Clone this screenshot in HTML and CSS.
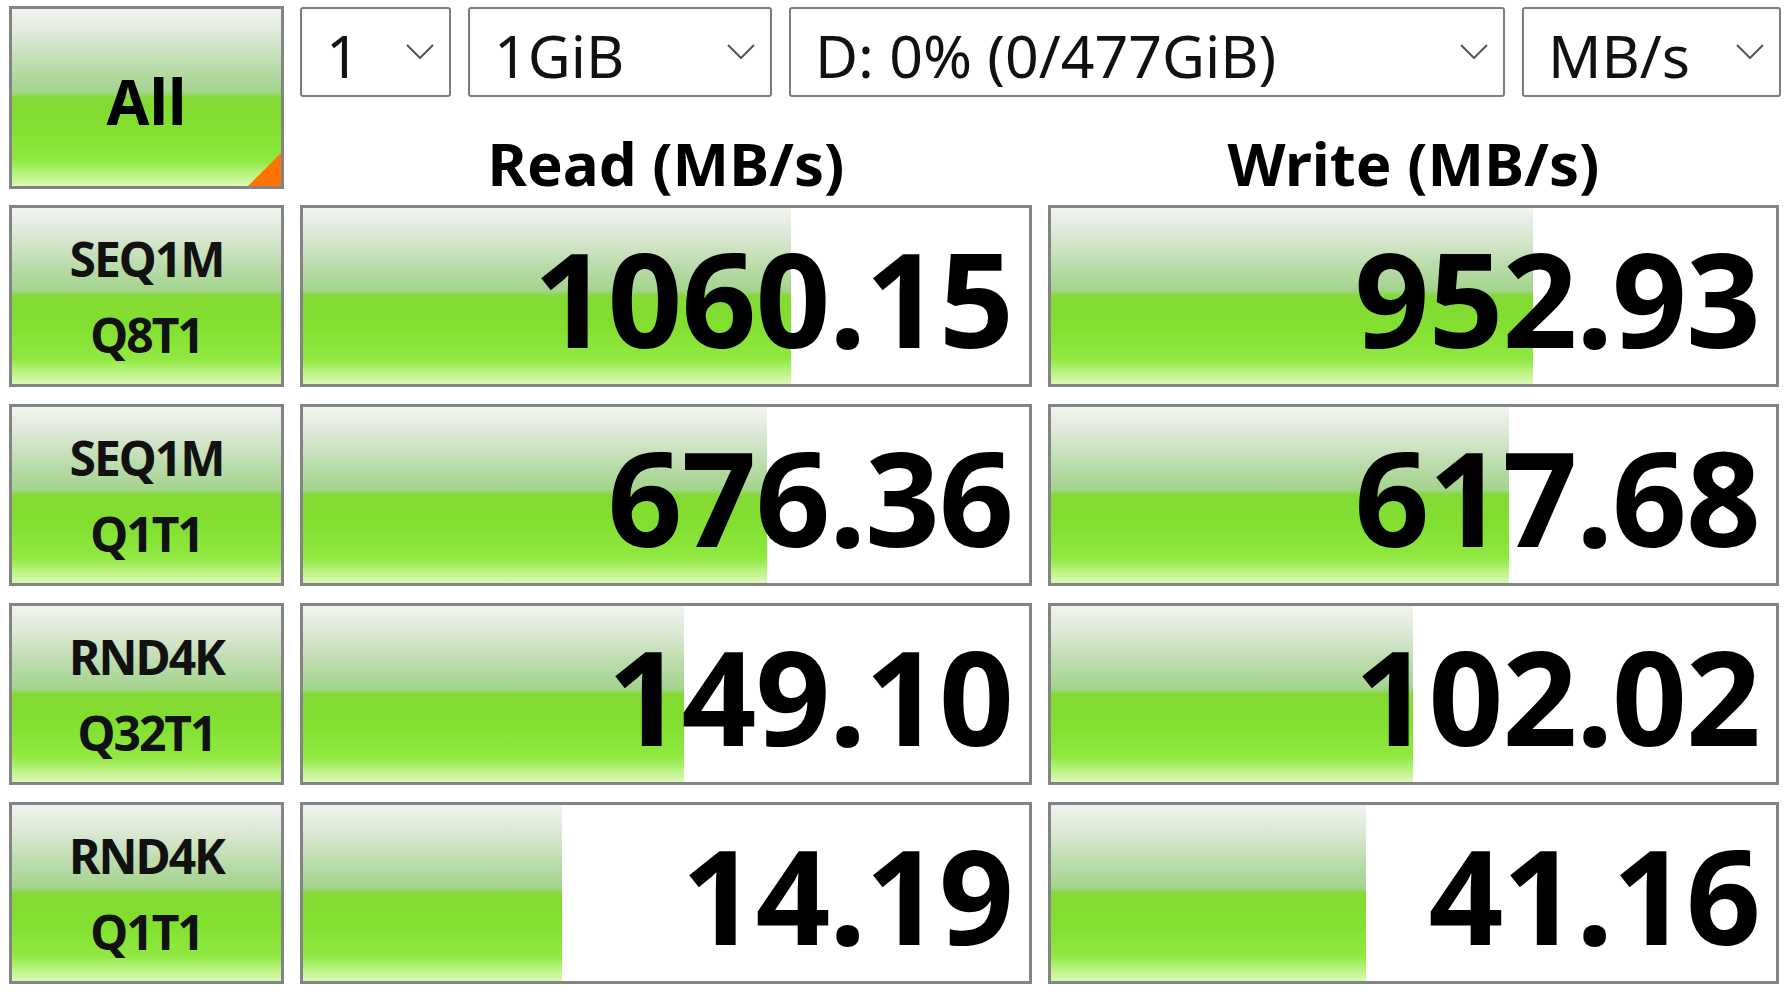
FILE: index.html
```html
<!DOCTYPE html>
<html lang="en">
<head>
<meta charset="utf-8">
<title>CrystalDiskMark</title>
<link rel="stylesheet" href="styles.css">
</head>
<body>
<div class="app">
  <div class="top">
    <div class="all green">All<span class="corner"></span></div>
    <div class="selects">
      <div class="select s-count"><span>1</span><svg class="chev" viewBox="0 0 28 15"><polyline points="1,1 14,14 27,1"/></svg></div>
      <div class="select s-size"><span>1GiB</span><svg class="chev" viewBox="0 0 28 15"><polyline points="1,1 14,14 27,1"/></svg></div>
      <div class="select s-drive"><span>D: 0% (0/477GiB)</span><svg class="chev" viewBox="0 0 28 15"><polyline points="1,1 14,14 27,1"/></svg></div>
      <div class="select s-unit"><span>MB/s</span><svg class="chev" viewBox="0 0 28 15"><polyline points="1,1 14,14 27,1"/></svg></div>
    </div>
    <div class="head">Read (MB/s)</div>
    <div class="head">Write (MB/s)</div>
  </div>
  <div class="results">
    <div class="label green"><span>SEQ1M</span><span>Q8T1</span></div>
    <div class="cell"><div class="bar" style="width:67.2%"></div><div class="num">1060.15</div></div>
    <div class="cell"><div class="bar" style="width:66.5%"></div><div class="num">952.93</div></div>

    <div class="label green"><span>SEQ1M</span><span>Q1T1</span></div>
    <div class="cell"><div class="bar" style="width:63.9%"></div><div class="num">676.36</div></div>
    <div class="cell"><div class="bar" style="width:63.2%"></div><div class="num">617.68</div></div>

    <div class="label green"><span>RND4K</span><span>Q32T1</span></div>
    <div class="cell"><div class="bar" style="width:52.5%"></div><div class="num">149.10</div></div>
    <div class="cell"><div class="bar" style="width:49.9%"></div><div class="num">102.02</div></div>

    <div class="label green"><span>RND4K</span><span>Q1T1</span></div>
    <div class="cell"><div class="bar" style="width:35.7%"></div><div class="num">14.19</div></div>
    <div class="cell"><div class="bar" style="width:43.4%"></div><div class="num">41.16</div></div>
  </div>
</div>
</body>
</html>
```
FILE: styles.css
```css
html, body {
  margin: 0;
  padding: 0;
  background: #ffffff;
}

body {
  font-family: "Noto Sans", "Open Sans", sans-serif;
  color: #000;
}

.app {
  padding: 6px 8px 0 9px;
}

.top,
.results {
  display: grid;
  grid-template-columns: 275px 732px 731px;
  column-gap: 16px;
}

.top {
  grid-template-rows: 91px 92px;
}

.results {
  margin-top: 16px;
  grid-template-rows: repeat(4, 182px);
  row-gap: 17px;
}

.green {
  background: linear-gradient(to bottom,
    #f1f4f0 0%,
    #e0eada 13%,
    #bcdcad 32%,
    #a3d48d 47%,
    #84d934 50%,
    #82e030 68%,
    #91e942 86%,
    #b8f37e 93%,
    #dcf9b8 100%);
}

.all {
  grid-row: 1 / 3;
  grid-column: 1;
  box-sizing: border-box;
  border: 3px solid #848484;
  position: relative;
  display: flex;
  align-items: center;
  justify-content: center;
  font-weight: 700;
  font-size: 62px;
  padding-top: 6px;
  overflow: hidden;
}

.corner {
  position: absolute;
  right: 0;
  bottom: 0;
  width: 0;
  height: 0;
  border-left: 33px solid transparent;
  border-bottom: 33px solid #ff7400;
}

.selects {
  grid-column: 2 / 4;
  grid-row: 1;
  display: flex;
  gap: 17px;
  margin-top: 1px;
  height: 90px;
  width: 1481px;
}

.select {
  box-sizing: border-box;
  height: 90px;
  border: 2px solid #7d7d7d;
  border-radius: 3px;
  display: flex;
  align-items: center;
  justify-content: space-between;
  padding: 6px 15px 0 24px;
  font-size: 59px;
  font-weight: 400;
  color: #111;
  background: #fff;
}

.select span {
  line-height: 1;
}

.chev {
  width: 28px;
  height: 15px;
  margin-top: -8px;
  flex: none;
}

.chev polyline {
  fill: none;
  stroke: #555;
  stroke-width: 2;
}

.s-count { width: 151px; }
.s-size { width: 304px; }
.s-drive { width: 716px; }
.s-unit { width: 259px; }

.head {
  grid-row: 2;
  text-align: center;
  font-weight: 700;
  font-size: 60px;
  line-height: 1;
  align-self: end;
  padding-bottom: 0;
  margin-bottom: -4px;
  color: #000;
}

.label {
  box-sizing: border-box;
  border: 3px solid #848484;
  display: flex;
  flex-direction: column;
  align-items: center;
  justify-content: center;
  gap: 8px;
  font-weight: 700;
  font-size: 48px;
  letter-spacing: -2px;
  line-height: 68px;
  color: #111;
  padding-top: 1px;
}

.cell {
  box-sizing: border-box;
  border: 3px solid #848484;
  background: #fff;
  display: grid;
  grid-template-columns: 1fr;
  grid-template-rows: 1fr;
}

.bar {
  grid-area: 1 / 1;
  height: 100%;
  background: linear-gradient(to bottom,
    #f1f4f0 0%,
    #e0eada 13%,
    #bcdcad 32%,
    #a3d48d 47%,
    #84d934 50%,
    #82e030 68%,
    #91e942 86%,
    #b8f37e 93%,
    #dcf9b8 100%);
}

.num {
  grid-area: 1 / 1;
  align-self: center;
  justify-self: end;
  font-weight: 700;
  font-size: 131px;
  line-height: 1;
  letter-spacing: -1px;
  padding-right: 16px;
  padding-top: 3px;
  color: #000;
}
```
